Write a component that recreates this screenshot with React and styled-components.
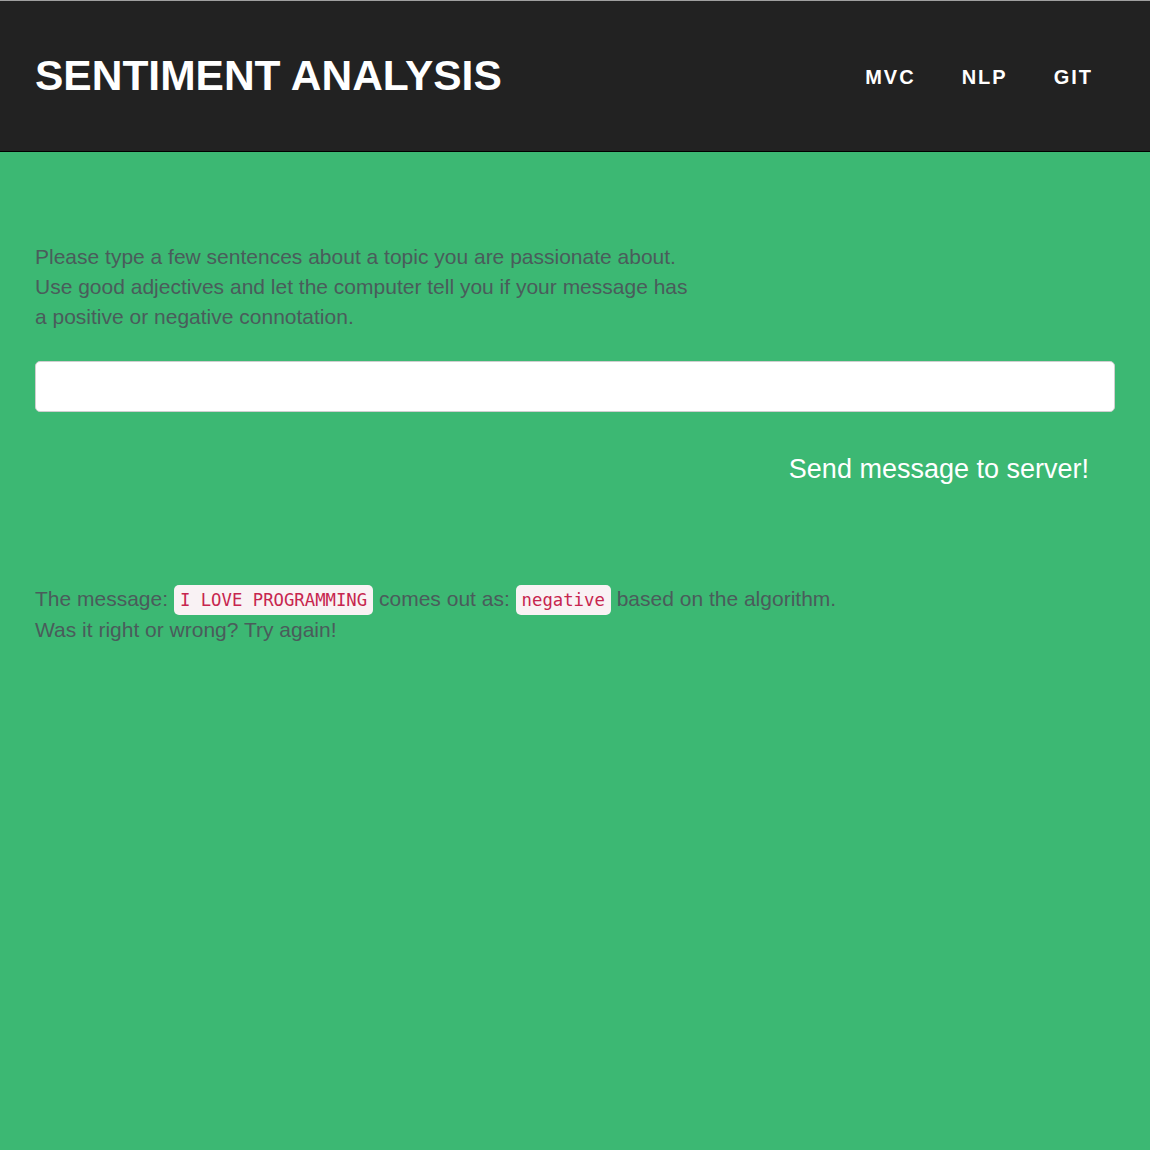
import React from 'react';
import styled, { createGlobalStyle } from "styled-components";

const Global = createGlobalStyle`
  html, body {
    margin: 0;
    padding: 0;
    background: #3cb873;
  }
  body {
    font-family: "Liberation Sans", Arial, sans-serif;
  }
`;

function App() {
  return (
    <>
      <Global />
      <Header>
        <Title>SENTIMENT ANALYSIS</Title>
        <Nav>
          <NavLink>MVC</NavLink>
          <NavLink>NLP</NavLink>
          <NavLink>GIT</NavLink>
        </Nav>
      </Header>
      <Main>
        <Intro>
          Please type a few sentences about a topic you are passionate about.<br />
          Use good adjectives and let the computer tell you if your message has<br />
          a positive or negative connotation.
        </Intro>
        <Input type="text" />
        <Actions>
          <SendButton>Send message to server!</SendButton>
        </Actions>
        <Result>
          The message: <Code>I LOVE PROGRAMMING</Code> comes out as: <Code>negative</Code> based on the algorithm.<br />
          Was it right or wrong? Try again!
        </Result>
      </Main>
    </>
  );
}

const Header = styled.header`
  display: flex;
  align-items: center;
  justify-content: space-between;
  height: 150px;
  padding: 0 35px;
  background: #222222;
  border-top: 1px solid #a0a0a0;
  border-bottom: 1px solid #000;
`;

const Title = styled.h1`
  margin: 0;
  color: #fff;
  font-size: 42.5px;
  font-weight: bold;
`;

const Nav = styled.nav`
  display: flex;
  gap: 46px;
  padding-right: 22px;
  margin-top: 2px;
`;

const NavLink = styled.a`
  color: #fff;
  font-size: 20px;
  font-weight: bold;
  letter-spacing: 2px;
  cursor: pointer;
`;

const Main = styled.main`
  display: flex;
  flex-direction: column;
  padding: 90px 35px 0;
`;

const Intro = styled.p`
  margin: 0 0 29px;
  color: #4a5c5b;
  font-size: 21px;
  line-height: 30px;
`;

const Input = styled.input`
  box-sizing: border-box;
  height: 51px;
  width: 100%;
  border: 1px solid #cfcfcf;
  border-radius: 5px;
  background: #fff;
  font-size: 20px;
  padding: 0 16px;
  outline: none;
`;

const Actions = styled.div`
  display: flex;
  justify-content: flex-end;
  padding: 42px 26px 0;
`;

const SendButton = styled.button`
  background: none;
  border: none;
  padding: 0;
  color: #fff;
  font-family: "Liberation Sans", Arial, sans-serif;
  font-size: 27px;
  cursor: pointer;
`;

const Result = styled.p`
  margin: 99px 0 0;
  color: #4a5c5b;
  font-size: 21px;
  line-height: 30px;
`;

const Code = styled.code`
  font-family: "DejaVu Sans Mono", "Liberation Mono", monospace;
  font-size: 17.3px;
  color: #c7254e;
  background: #f9f2f4;
  border-radius: 5px;
  padding: 5px 6px;
`;

export default App
